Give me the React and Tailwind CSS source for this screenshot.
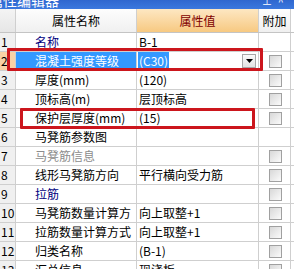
import React from "react";

const rows = [
  { n: "1", name: "名称", value: "B-1", tone: "navy", check: false },
  { n: "2", name: "混凝土强度等级", value: "(C30)", selected: true, check: true },
  { n: "3", name: "厚度(mm)", value: "(120)", check: true },
  { n: "4", name: "顶标高(m)", value: "层顶标高", check: true },
  { n: "5", name: "保护层厚度(mm)", value: "(15)", check: true },
  { n: "6", name: "马凳筋参数图", value: "", check: false },
  { n: "7", name: "马凳筋信息", value: "", tone: "grey", check: true },
  { n: "8", name: "线形马凳筋方向", value: "平行横向受力筋", check: true },
  { n: "9", name: "拉筋", value: "", tone: "navy", check: true },
  { n: "10", name: "马凳筋数量计算方", value: "向上取整+1", check: true },
  { n: "11", name: "拉筋数量计算方式", value: "向上取整+1", check: true },
  { n: "12", name: "归类名称", value: "(B-1)", check: true },
  { n: "13", name: "汇总信息", value: "现浇板", check: true },
];

function Checkbox() {
  return (
    <div className="w-[13px] h-[13px] border border-[#a0a0a0] bg-linear-to-br from-[#d8d8d8] to-[#fbfbfb]" />
  );
}

function Row({ r }) {
  const nameColor =
    r.tone === "navy"
      ? "text-[#000080]"
      : r.tone === "grey"
      ? "text-[#8c8c8c]"
      : "text-black";
  return (
    <div className="flex h-[19px] border-b border-[#cfcfcf] leading-[18px]">
      <div
        className={`w-[16px] shrink-0 border-r border-[#cfcfcf] pl-[1px] text-[12px] ${
          r.selected ? "bg-[#f9d2a6]" : "bg-[#f0f0f0]"
        }`}
      >
        {r.n}
      </div>
      <div
        className={`w-[121px] shrink-0 border-r border-[#cfcfcf] pl-[19px] overflow-hidden whitespace-nowrap ${
          r.selected ? "bg-[#3399ff] text-white" : nameColor
        }`}
      >
        {r.name}
      </div>
      <div className="w-[122px] shrink-0 border-r border-[#cfcfcf] flex items-center overflow-hidden whitespace-nowrap">
        {r.selected ? (
          <>
            <span className="ml-[1px] px-[1px] bg-[#3399ff] text-white">{r.value}</span>
            <div className="flex-1" />
            <div className="mr-[2px] w-[14px] h-[14px] border border-[#a7a7a7] bg-linear-to-b from-[#fafafa] to-[#e2e2e2] flex items-center justify-center">
              <svg width="7" height="4" viewBox="0 0 7 4">
                <path d="M0 0H7L3.5 4Z" fill="#000" />
              </svg>
            </div>
          </>
        ) : (
          <span className="pl-[2px]">{r.value}</span>
        )}
      </div>
      <div className="w-[32px] shrink-0 border-r border-[#cfcfcf] flex items-center justify-center pl-[1px]">
        {r.check && <Checkbox />}
      </div>
    </div>
  );
}

export default function App() {
  return (
    <div className="relative w-[294px] h-[269px] overflow-hidden bg-white text-[12px] text-black font-['Noto_Sans_CJK_SC','Noto_Sans',sans-serif]">
      {/* title bar, mostly scrolled off */}
      <div className="relative h-[9px] bg-linear-to-b from-[#2f67cf] to-[#3b78de] overflow-hidden">
        <div className="absolute left-[-11px] top-[-8px] text-[14px] leading-[16px] text-white whitespace-nowrap tracking-[0px]">
          属性编辑器
        </div>
        <div className="absolute left-[262px] top-[-4px] text-[10px] leading-[10px] text-white">⊥</div>
        <div className="absolute left-[278px] top-[-3px] text-[10px] leading-[10px] text-white">^</div>
      </div>

      {/* header */}
      <div className="flex h-[24px] border-b border-[#c4c4c4] leading-[23px] text-[12px]">
        <div className="w-[16px] shrink-0 border-r border-[#cfcfcf] bg-linear-to-b from-[#f4f4f4] to-[#e6e6e6]" />
        <div className="w-[121px] shrink-0 border-r border-[#cfcfcf] bg-linear-to-b from-[#fdfdfd] to-[#f0f0f0] text-center">
          属性名称
        </div>
        <div className="w-[122px] shrink-0 border-r border-[#cfcfcf] bg-linear-to-b from-[#fde7c2] to-[#f7c981] text-center text-[#800000]">
          属性值
        </div>
        <div className="w-[32px] shrink-0 border-r border-[#cfcfcf] bg-linear-to-b from-[#fdfdfd] to-[#f0f0f0] text-center">
          附加
        </div>
      </div>

      {rows.map((r) => (
        <Row key={r.n} r={r} />
      ))}

      {/* red annotation boxes */}
      <div className="absolute left-[7px] top-[48px] w-[256px] h-[23px] border-[3px] border-[#cc161d] rounded-[1px]" />
      <div className="absolute left-[20px] top-[108px] w-[235px] h-[21px] border-[3px] border-[#cc161d] rounded-[1px]" />
    </div>
  );
}
